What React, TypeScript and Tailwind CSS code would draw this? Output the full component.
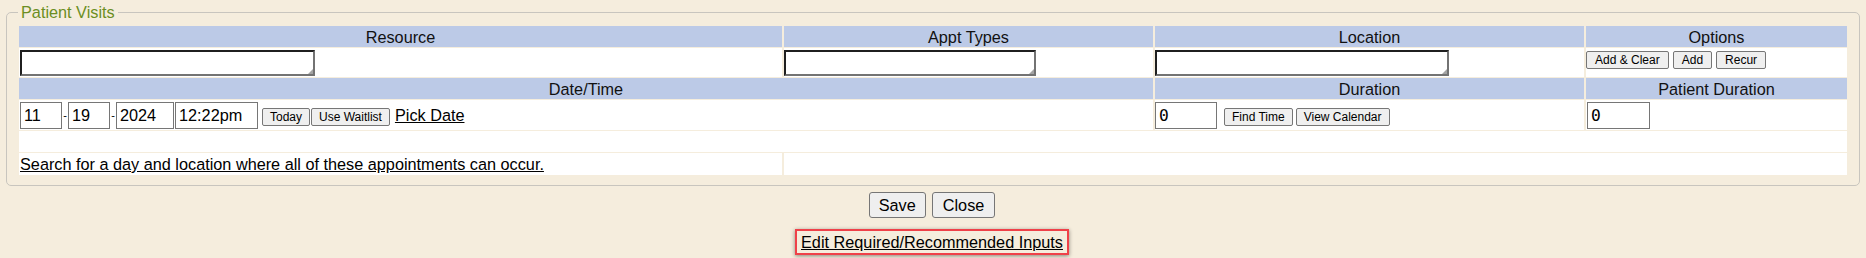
const head = "flex items-center justify-center bg-[#bccae7] text-[16.25px] leading-[18px] text-[#111]";
const cell = "flex bg-white";
const area =
  "block h-[26px] resize-none border-2 border-t-[#1f1f1f] border-l-[#1f1f1f] border-r-[#737373] border-b-[#737373] bg-white p-0 outline-none";
const smallBtn =
  "h-[18px] rounded-[2px] border border-[#767676] bg-[#efefef] text-[12px] leading-[14px] text-black";
const box = "h-[27px] border border-[#767676] bg-white px-[3px] text-[16.25px] leading-[18px] text-black outline-none";

function Area({ width }: { width: string }) {
  return (
    <div className="relative">
      <textarea className={`${area} ${width}`} rows={1} />
      {/* resize grip */}
      <span className="absolute bottom-[2px] right-[2px] h-0 w-0 border-b-[5px] border-l-[5px] border-b-[#a3a3a3] border-l-transparent" />
    </div>
  );
}

function Dash() {
  return <span className="w-[6px] text-center text-[11px] leading-[11px]">-</span>;
}

export default function App() {
  return (
    <div className="min-h-[258px] bg-[#f5eddd] pt-[3px] font-['Liberation_Sans',Arial,sans-serif] text-[16.25px] text-black">
      <fieldset className="mx-[6px] rounded-[5px] border border-[#c8c5be] px-[12px] pb-[10px] pt-[5px]">
        <legend className="-ml-px px-[3px] text-[16.25px] leading-[18px] text-[#6b8e23]">Patient Visits</legend>

        <div className="grid grid-cols-[763px_369px_429px_261px] grid-rows-[21px_29px_21px_30px_21px_22px] gap-x-[2px] gap-y-px">
          {/* header row 1 */}
          <div className={head}>Resource</div>
          <div className={head}>Appt Types</div>
          <div className={head}>Location</div>
          <div className={head}>Options</div>

          {/* inputs */}
          <div className={`${cell} items-center pl-px`}>
            <Area width="w-[295px]" />
          </div>
          <div className={`${cell} items-center`}>
            <Area width="w-[252px]" />
          </div>
          <div className={`${cell} items-center`}>
            <Area width="w-[294px]" />
          </div>
          <div className={`${cell} items-start gap-[4px] pt-[3px]`}>
            <button className={`${smallBtn} px-[8px]`}>Add &amp; Clear</button>
            <button className={`${smallBtn} px-[8px]`}>Add</button>
            <button className={`${smallBtn} px-[8px]`}>Recur</button>
          </div>

          {/* header row 2 */}
          <div className={`${head} col-span-2`}>Date/Time</div>
          <div className={head}>Duration</div>
          <div className={head}>Patient Duration</div>

          {/* date / duration */}
          <div className={`${cell} col-span-2 items-center pl-px`}>
            <input className={`${box} w-[42px]`} defaultValue="11" />
            <Dash />
            <input className={`${box} w-[42px]`} defaultValue="19" />
            <Dash />
            <input className={`${box} w-[58px]`} defaultValue="2024" />
            <input className={`${box} ml-px w-[83px]`} defaultValue="12:22pm" />
            <button className={`${smallBtn} ml-[4px] mt-[3px] px-[7px]`}>Today</button>
            <button className={`${smallBtn} ml-px mt-[3px] px-[7px]`}>Use Waitlist</button>
            <a href="#" className="ml-[5px] leading-[18px] text-black underline">
              Pick Date
            </a>
          </div>
          <div className={`${cell} items-center`}>
            <input
              className={`${box} h-[26px] w-[62px] font-['DejaVu_Sans_Mono',monospace] text-[13px]`}
              defaultValue="0"
            />
            <button className={`${smallBtn} ml-[7px] mt-[3px] px-[7px]`}>Find Time</button>
            <button className={`${smallBtn} ml-[3px] mt-[3px] px-[7px]`}>View Calendar</button>
          </div>
          <div className={`${cell} items-center`}>
            <input
              className={`${box} ml-px h-[26px] w-[63px] font-['DejaVu_Sans_Mono',monospace] text-[13px]`}
              defaultValue="0"
            />
          </div>

          {/* spacer row */}
          <div className={`${cell} col-span-4`} />

          {/* search link */}
          <div className={`${cell} items-center pl-px`}>
            <a href="#" className="leading-[18px] text-black underline">
              Search for a day and location where all of these appointments can occur.
            </a>
          </div>
          <div className={`${cell} col-span-3`} />
        </div>
      </fieldset>

      <div className="mt-[6px] flex justify-center gap-[6px] pr-[2px]">
        <button className="h-[26px] rounded-[3px] border border-[#767676] bg-[#efefef] px-[9px] text-[16.25px] leading-[18px]">
          Save
        </button>
        <button className="h-[26px] rounded-[3px] border border-[#767676] bg-[#efefef] px-[10px] text-[16.25px] leading-[18px]">
          Close
        </button>
      </div>

      <div className="mt-[11px] flex justify-center pr-[2px]">
        <a
          href="#"
          className="border-2 border-[#ef4149] px-[4px] py-[2px] leading-[18px] text-black underline shadow-[0_1px_4px_rgba(0,0,0,0.45)]"
        >
          Edit Required/Recommended Inputs
        </a>
      </div>
    </div>
  );
}
